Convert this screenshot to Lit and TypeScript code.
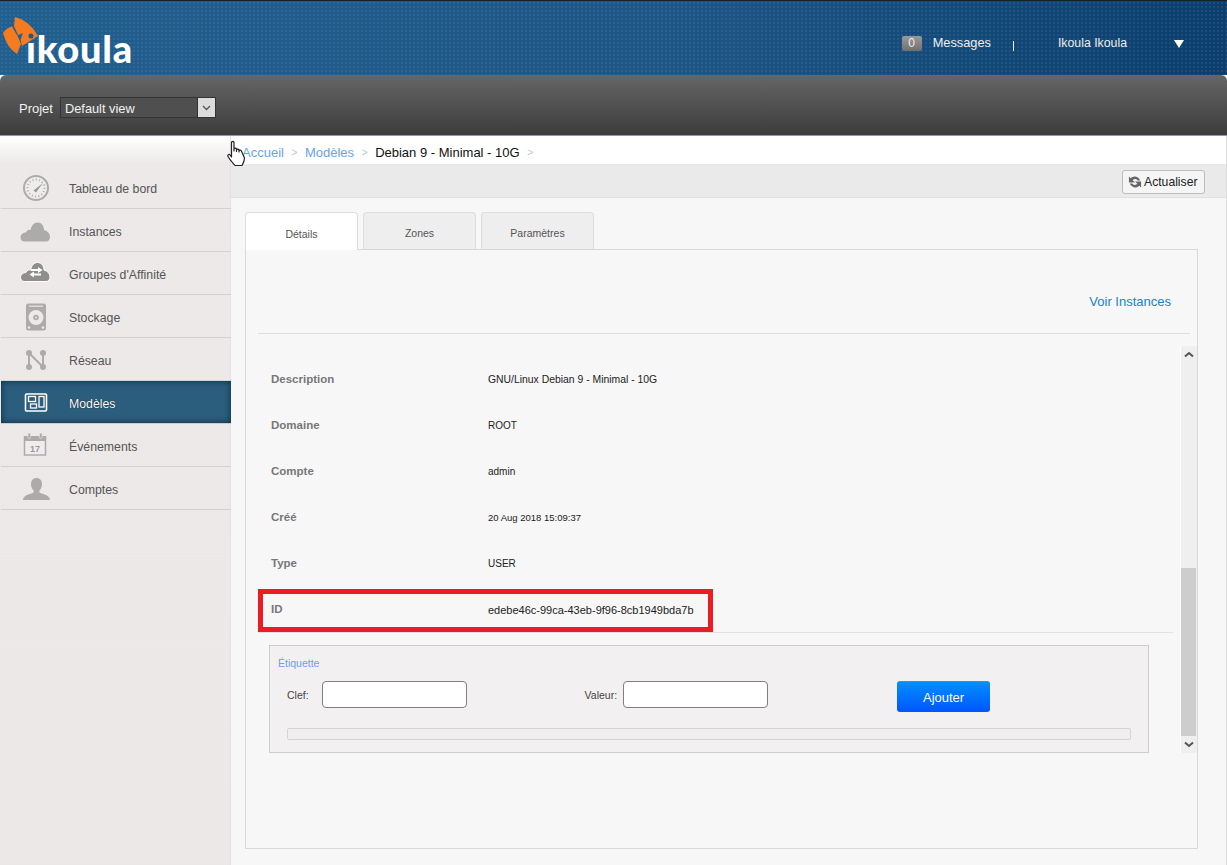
import { LitElement, html, css, svg } from 'lit';
import { customElement } from 'lit/decorators.js';

const GREY = '#adabaa';

const CLOUD = 'M4.500 26.500C2 26.500.5 24.500.5 22.500.5 19.500 3 17.500 6 17.500 7 15 9 14.500 10.500 15 11.500 10.500 14 7.500 17.500 7.500 21.500 7.500 24 11 24 15 27.500 16 30 18.500 30 22 30 24.500 28.500 26.500 26 26.500Z';

// sidebar icons, all in a 32x32 box
const icons: Record<string, unknown> = {
  gauge: svg`<circle cx="16" cy="16" r="12" fill="#efedec" stroke="${GREY}" stroke-width="2"/>
    <circle cx="16" cy="16" r="8.500" fill="none" stroke="${GREY}" stroke-width="2" stroke-dasharray="1 2.300"/>
    <path d="M13.500 18.500L23 11 16 20.500Z" fill="#999"/>`,
  cloud: svg`<path d="${CLOUD}" fill="${GREY}"/>`,
  affinity: svg`<g transform="translate(0 -3)"><path d="${CLOUD}" fill="#8f8e8d" stroke="#fff" stroke-width="1"/>
    <path d="M11 14h7v-2l4.500 3-4.500 3v-2h-7ZM21 18.500h-7v-2l-4.500 3 4.500 3v-2h7Z" fill="#fff"/></g>`,
  disk: svg`<rect x="6" y="2.500" width="20" height="27" rx="2.500" fill="${GREY}"/>
    <rect x="9" y="4.500" width="14" height="1.500" fill="#dcdad9"/>
    <circle cx="16" cy="16.500" r="7.500" fill="#ece9e8"/><circle cx="16" cy="16.500" r="2.800" fill="${GREY}"/><circle cx="16" cy="16.500" r="1" fill="#ece9e8"/>
    <circle cx="9" cy="26.500" r="1.300" fill="#ece9e8"/><circle cx="23" cy="26.500" r="1.300" fill="#ece9e8"/>`,
  network: svg`<path d="M9 9V23M9 9L23 23M23 9V23" stroke="${GREY}" stroke-width="2" fill="none"/>
    <circle cx="9" cy="9" r="3" fill="${GREY}"/><circle cx="23" cy="9" r="3" fill="${GREY}"/>
    <circle cx="9" cy="23" r="3" fill="${GREY}"/><circle cx="23" cy="23" r="3" fill="${GREY}"/>`,
  template: svg`<rect x="5.500" y="7" width="21" height="17" rx="1" fill="none" stroke="#fff" stroke-width="1.600"/>
    <rect x="8.500" y="9.500" width="7" height="5" fill="none" stroke="#fff" stroke-width="1.300"/>
    <rect x="10.500" y="17" width="6" height="4" fill="none" stroke="#fff" stroke-width="1.300"/>
    <rect x="19" y="9.500" width="5" height="10.500" fill="none" stroke="#fff" stroke-width="1.300"/>`,
  calendar: svg`<rect x="4.500" y="7" width="21" height="18" fill="#efedec" stroke="${GREY}" stroke-width="1.500"/>
    <rect x="4" y="6" width="22" height="5" fill="${GREY}"/>
    <rect x="8" y="3" width="2.600" height="5.500" rx="1.300" fill="${GREY}" stroke="#ece9e8" stroke-width=".6"/>
    <rect x="19.500" y="3" width="2.600" height="5.500" rx="1.300" fill="${GREY}" stroke="#ece9e8" stroke-width=".6"/>
    <text x="15" y="22" text-anchor="middle" font-family="Liberation Sans" font-weight="700" font-size="9" fill="#999">17</text>`,
  user: svg`<path d="M16.500 5c3.500 0 5.500 2.600 5.500 6 0 2.800-1 4.800-2.600 6.500v2c1.300 1.500 10.600 2 10.600 7.500H3c0-5.500 9.300-6 10.600-7.500v-2C12 15.800 11 13.800 11 11c0-3.400 2-6 5.500-6Z" fill="${GREY}"/>`,
};

const menu = [
  ['gauge', 'Tableau de bord'],
  ['cloud', 'Instances'],
  ['affinity', "Groupes d'Affinité"],
  ['disk', 'Stockage'],
  ['network', 'Réseau'],
  ['template', 'Modèles'],
  ['calendar', 'Événements'],
  ['user', 'Comptes'],
];

const details = [
  ['Description', 'GNU/Linux Debian 9 - Minimal - 10G'],
  ['Domaine', 'ROOT'],
  ['Compte', 'admin'],
  ['Créé', '20 Aug 2018 15:09:37'],
  ['Type', 'USER'],
  ['ID', 'edebe46c-99ca-43eb-9f96-8cb1949bda7b'],
];

@customElement('app-root')
export class AppRoot extends LitElement {
  static styles = css`
    :host {
      display: block;
      position: relative;
      height: 865px;
      overflow: hidden;
      background: #f7f7f7;
      font-family: 'Liberation Sans', Arial, sans-serif;
      color: #333;
    }
    .header {
      height: 74px;
      border-top: 1px solid #14202b;
      display: flex;
      align-items: flex-start;
      background-color: #174d7e;
      background-image:
        radial-gradient(circle at center, rgba(255, 255, 255, 0.07) 1px, transparent 1.4px),
        linear-gradient(90deg, #215f8f 0%, #1c5687 55%, #0b3e6d 100%);
      background-size: 4px 4px, 100% 100%;
    }
    .logo {
      position: relative;
      width: 140px;
      height: 74px;
    }
    .logo svg {
      position: absolute;
      left: 0;
      top: 0;
    }
    .logo span {
      position: absolute;
      left: 26px;
      top: 25px;
      font-family: 'Lato', sans-serif;
      font-weight: 900;
      font-size: 38px;
      letter-spacing: 0.8px;
      line-height: 44px;
      color: #fff;
    }
    .user {
      margin-left: auto;
      display: flex;
      align-items: center;
      height: 15px;
      margin-top: 35px;
      padding-right: 43px;
      color: #eee;
      font-size: 12.800px;
    }
    .badge {
      width: 20px;
      height: 15px;
      box-sizing: border-box;
      border-radius: 2px;
      background: linear-gradient(#9a9a9a, #6f6f6f);
      color: #eee;
      font-size: 12px;
      text-align: center;
      line-height: 15px;
      margin-right: 11px;
    }
    .label {
      padding-bottom: 2px;
    }
    .name {
      font-size: 12.300px;
    }
    .bar {
      width: 1px;
      height: 10px;
      background: #eee;
      margin: 4px 44px 0 22px;
    }
    .tri {
      width: 0;
      height: 0;
      margin-left: 47px;
      border-left: 5.500px solid transparent;
      border-right: 5.500px solid transparent;
      border-top: 8px solid #fff;
    }
    .project {
      height: 55px;
      border-radius: 6px 6px 0 0;
      background: linear-gradient(#666, #3c3c3c);
      border-bottom: 1px solid #8d9aa6;
      display: flex;
      align-items: center;
      padding: 5px 0 0 19px;
      color: #f2f2f2;
      font-size: 13px;
      gap: 7px;
    }
    .project span {
      padding-top: 1px;
    }
    .select {
      width: 156px;
      height: 21px;
      box-sizing: border-box;
      border: 1px solid #333;
      background: #4f4f4f;
      font-size: 12.800px;
      line-height: 21px;
      padding-left: 4px;
      display: flex;
      justify-content: space-between;
    }
    .select i {
      width: 17px;
      height: 19px;
      background: #dcdcdc;
      border-left: 1px solid #333;
      display: flex;
      align-items: center;
      justify-content: center;
    }
    .body {
      display: flex;
      height: 729px;
    }
    .side {
      width: 231px;
      flex: none;
      box-sizing: border-box;
      padding: 30px 0 0 1px;
      background: linear-gradient(#fff 0, #ece9e8 28px, #ebe8e7 100%);
      box-shadow: inset -1px 0 1px #e4e2e1;
    }
    .item {
      height: 43px;
      box-sizing: border-box;
      border-bottom: 1px solid #d4d2d1;
      display: flex;
      align-items: center;
      padding: 1px 0 0 19px;
      gap: 17px;
      font-size: 12.300px;
      color: #555;
    }
    .item svg {
      flex: none;
      width: 32px;
      height: 32px;
    }
    .item span {
      padding-top: 2px;
    }
    .item.on {
      background: #2b5d7d;
      color: #fff;
      box-shadow: inset 0 0 6px #0c2a3d;
      border-bottom-color: #ccc;
      text-shadow: 0 0 1px #000;
    }
    .main {
      flex: 1;
      min-width: 0;
      border-right: 1px solid #ddd;
    }
    .crumbs {
      height: 28px;
      box-sizing: border-box;
      padding: 5px 0 0 11px;
      background: #fff;
      display: flex;
      align-items: center;
      gap: 7.600px;
      font-size: 13px;
      color: #65a4ef;
    }
    .crumbs b {
      font-weight: 400;
      color: #c4c4c4;
      font-size: 10px;
    }
    .crumbs em {
      font-style: normal;
      color: #111;
    }
    .tools {
      height: 30px;
      padding: 3px 21px 0 0;
      background: #eaeaea;
      border-bottom: 1px solid #e0e0e0;
      display: flex;
      justify-content: flex-end;
      align-items: center;
    }
    .refresh {
      width: 83px;
      height: 24px;
      box-sizing: border-box;
      border: 1px solid #bdbdbd;
      border-radius: 3px;
      background: #f5f5f5;
      display: flex;
      align-items: center;
      gap: 2px;
      padding-left: 5px;
      font-size: 12.200px;
      color: #222;
    }
    .content {
      padding: 14px 28px 0 14px;
    }
    .tabs {
      display: flex;
      gap: 5px;
      height: 37px;
      position: relative;
      z-index: 1;
    }
    .tab {
      width: 113px;
      height: 37px;
      box-sizing: border-box;
      border: 1px solid #ddd;
      border-bottom: none;
      border-radius: 4px 4px 0 0;
      background: #eee;
      font-size: 10.500px;
      color: #555;
      display: flex;
      align-items: center;
      justify-content: center;
      padding-top: 4px;
    }
    .tab.on {
      background: #fff;
      height: 38px;
      padding-top: 5px;
      padding-bottom: 1px;
    }
    .panel {
      height: 600px;
      box-sizing: border-box;
      border: 1px solid #d8d8d8;
      background: #f7f7f7;
      padding: 0 7px 0 12px;
    }
    .links {
      height: 84px;
      box-sizing: border-box;
      border-bottom: 1px solid #dfdfdf;
      display: flex;
      justify-content: flex-end;
      padding: 44px 19px 0 0;
      font-size: 13px;
      color: #1b80cc;
    }
    .scroll {
      margin-top: 12px;
      display: flex;
      height: 407px;
      margin-right: -7px;
    }
    .info {
      flex: 1;
      min-width: 0;
      padding-right: 7px;
    }
    .rows {
      padding-top: 16px;
      border-bottom: 1px solid #e2e2e2;
    }
    .row {
      height: 46px;
      display: flex;
      padding: 11px 0 0 13px;
      box-sizing: border-box;
    }
    .row:last-child {
      height: 40px;
    }
    .row label {
      width: 217px;
      font-size: 11.500px;
      font-weight: 700;
      color: #777;
    }
    .row span {
      font-size: 10px;
      color: #222;
      line-height: 14px;
    }
    .row:nth-child(1) span {
      font-size: 10.400px;
    }
    .row:nth-child(4) span {
      font-size: 9.500px;
    }
    .row:nth-child(6) span {
      font-size: 11px;
    }
    .tags {
      margin: 12px 24px 0 11px;
      height: 108px;
      box-sizing: border-box;
      border: 1px solid #ccc;
      background: #f2f0f1;
      padding: 11px 17px 0 8px;
    }
    .tags h4 {
      margin: 0 0 12px;
      font-weight: 400;
      font-size: 10.500px;
      line-height: 12px;
      color: #6e9ef0;
    }
    .form {
      display: flex;
      align-items: flex-start;
      padding-left: 9px;
      font-size: 10.500px;
      color: #444;
    }
    .form label {
      padding-top: 8px;
    }
    .field {
      width: 145px;
      height: 27px;
      box-sizing: border-box;
      border: 1px solid #808080;
      border-radius: 4px;
      background: #fff;
      margin-left: 13px;
    }
    .field.val {
      margin-left: 6px;
    }
    .gap1 {
      width: 118px;
    }
    .gap2 {
      width: 129px;
    }
    .add {
      width: 93px;
      height: 31px;
      box-sizing: border-box;
      border: none;
      border-top: 1px solid #5a86a8;
      border-radius: 3px;
      background: linear-gradient(#0090ff, #0055ff);
      color: #fff;
      font: 13px 'Liberation Sans', Arial, sans-serif;
    }
    .progress {
      margin: 16px 0 0 9px;
      height: 12px;
      box-sizing: border-box;
      border: 1px solid #d4d4d4;
      border-radius: 2px;
      background: #efefef;
    }
    .track {
      width: 16px;
      flex: none;
      background: #efefef;
      border-left: 1px solid #fff;
      display: flex;
      flex-direction: column;
      align-items: center;
    }
    .track svg {
      flex: none;
      margin: 5px 0;
    }
    .gutter {
      flex: 1;
      width: 100%;
      display: flex;
      flex-direction: column;
      justify-content: flex-end;
    }
    .thumb {
      height: 168px;
      width: 15px;
      background: #cdcdcd;
    }
    .mark {
      position: absolute;
      left: 258px;
      top: 589px;
      width: 455px;
      height: 43px;
      box-sizing: border-box;
      border: 5px solid #ed1c24;
      pointer-events: none;
    }
    .hand {
      position: absolute;
      left: 227px;
      top: 140px;
    }
  `;

  render() {
    return html`
      <div class="header">
        <div class="logo">
          <svg width="42" height="60" viewBox="0 1 42 60">
            <path d="M15 17Q29 20 38 36L22 46 20.500 40 23 33 18 35 14 26Z" fill="#f47b20"/>
            <path d="M3 33Q6 28 12 26.500L18 37 21 44 17 54Q7 48 3 33Z" fill="#f47b20"/>
            <circle cx="31" cy="36" r="2.500" fill="#1d5a8a"/>
          </svg>
          <span>ıkoula</span>
        </div>
        <div class="user">
          <div class="badge">0</div>
          <div class="label">Messages</div>
          <div class="bar"></div>
          <div class="label name">Ikoula Ikoula</div>
          <div class="tri"></div>
        </div>
      </div>
      <div class="project">
        <span>Projet</span>
        <div class="select">
          Default view
          <i><svg width="9" height="6" viewBox="0 0 9 6"><path d="M1 1l3.500 3.500L8 1" fill="none" stroke="#555" stroke-width="1.300"/></svg></i>
        </div>
      </div>
      <div class="body">
        <div class="side">
          ${menu.map(
            ([icon, name]) => html`
              <div class="item ${icon === 'template' ? 'on' : ''}">
                <svg viewBox="0 0 32 32">${icons[icon]}</svg>
                <span>${name}</span>
              </div>
            `
          )}
        </div>
        <div class="main">
          <div class="crumbs">
            <span>Accueil</span><b>&gt;</b>
            <span>Modèles</span><b>&gt;</b>
            <em>Debian 9 - Minimal - 10G</em><b>&gt;</b>
          </div>
          <div class="tools">
            <div class="refresh">
              <svg width="14" height="14" viewBox="0 0 15 15">
                <path d="M13 6A6 6 0 0 0 3 3.500L1 1.500V8h6.500L5 5.500a3.500 3.500 0 0 1 5.500.5ZM2 9a6 6 0 0 0 10 2.500l2 2V7H7.500L10 9.500a3.500 3.500 0 0 1-5.500-.5Z" fill="#666"/>
              </svg>
              Actualiser
            </div>
          </div>
          <div class="content">
            <div class="tabs">
              <div class="tab on">Détails</div>
              <div class="tab">Zones</div>
              <div class="tab">Paramètres</div>
            </div>
            <div class="panel">
              <div class="links">Voir Instances</div>
              <div class="scroll">
                <div class="info">
                  <div class="rows">
                    ${details.map(
                      ([k, v]) => html`<div class="row"><label>${k}</label><span>${v}</span></div>`
                    )}
                  </div>
                  <div class="tags">
                    <h4>Étiquette</h4>
                    <div class="form">
                      <label>Clef:</label>
                      <div class="field"></div>
                      <div class="gap1"></div>
                      <label>Valeur:</label>
                      <div class="field val"></div>
                      <div class="gap2"></div>
                      <button class="add">Ajouter</button>
                    </div>
                    <div class="progress"></div>
                  </div>
                </div>
                <div class="track">
                  <svg width="10" height="7" viewBox="0 0 10 7"><path d="M1 5.500L5 2l4 3.500" fill="none" stroke="#555" stroke-width="2"/></svg>
                  <div class="gutter"><div class="thumb"></div></div>
                  <svg width="10" height="7" viewBox="0 0 10 7"><path d="M1 1.500L5 5l4-3.500" fill="none" stroke="#555" stroke-width="2"/></svg>
                </div>
              </div>
            </div>
          </div>
        </div>
      </div>
      <div class="mark"></div>
      <svg class="hand" width="20" height="27" viewBox="0 0 20 27">
        <path d="M4.500 2.500c0-1.400 2.500-1.400 2.500 0V11 9c.3-1.200 2.200-1.200 2.500 0v2.500V10c.3-1.200 2.200-1.200 2.500 0v2V11c.3-1.200 2.200-1 2.500.3L17.500 18c0 3-1 5-2.500 7.500H8C6 23 3.500 21 1 16.500c-.7-1.500 1-2.800 2-1.500l1.500 2Z" fill="#fff" stroke="#222" stroke-width="1.200" stroke-linejoin="round"/>
      </svg>
    `;
  }
}
